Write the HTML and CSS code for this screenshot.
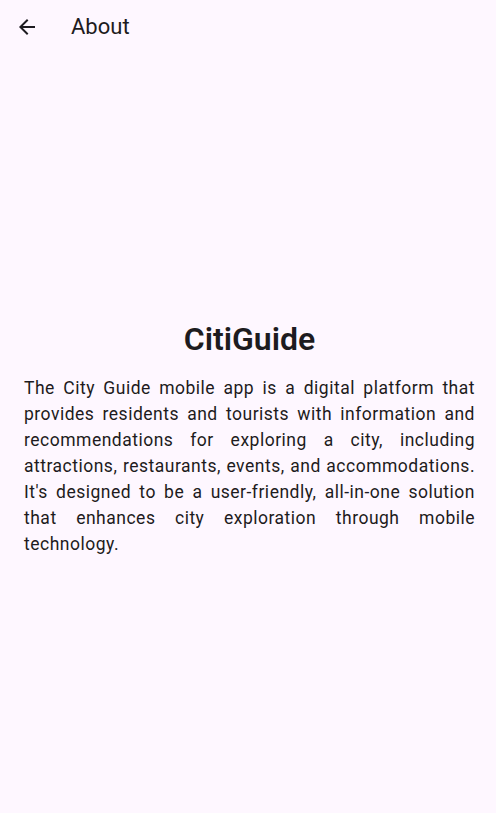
FILE: index.html
```html
<!DOCTYPE html>
<html>
<head>
<meta charset="utf-8">
<link rel="stylesheet" href="styles.css">
</head>
<body>
<div class="app">
  <header class="appbar">
    <button class="back" aria-label="Back">
      <svg width="24" height="24" viewBox="0 0 24 24"><path d="M20 11H7.83l5.59-5.59L12 4l-8 8 8 8 1.41-1.41L7.83 13H20v-2z" fill="#1D1B20"/></svg>
    </button>
    <h1 class="title">About</h1>
  </header>
  <main class="content">
    <h2 class="heading">CitiGuide</h2>
    <p class="text">The City Guide mobile app is a digital platform that provides residents and tourists with information and recommendations for exploring a city, including attractions, restaurants, events, and accommodations. It's designed to be a user-friendly, all-in-one solution that enhances city exploration through mobile technology.</p>
  </main>
</div>
</body>
</html>
```
FILE: styles.css
```css
html, body {
  margin: 0;
  padding: 0;
  background: #FEF7FF;
  color: #1D1B20;
  font-family: Roboto, "Noto Sans", sans-serif;
}
.app {
  display: flex;
  flex-direction: column;
  height: 813px;
}
.appbar {
  height: 53px;
  display: flex;
  align-items: center;
  padding-left: 15px;
}
.back {
  width: 24px;
  height: 24px;
  padding: 0;
  border: 0;
  background: none;
  display: flex;
}
.title {
  margin: 0 0 0 32px;
  font-size: 22px;
  font-weight: 400;
  line-height: 28px;
}
.content {
  flex: 1;
  display: flex;
  flex-direction: column;
  justify-content: center;
  padding: 10px 21px 0 24px;
}
.heading {
  margin: 0 0 17px;
  text-align: center;
  font-size: 32px;
  font-weight: 600;
  line-height: 38px;
}
.text {
  margin: 0;
  font-size: 17.5px;
  line-height: 26px;
  letter-spacing: 0.5px;
  text-align: justify;
}
```
